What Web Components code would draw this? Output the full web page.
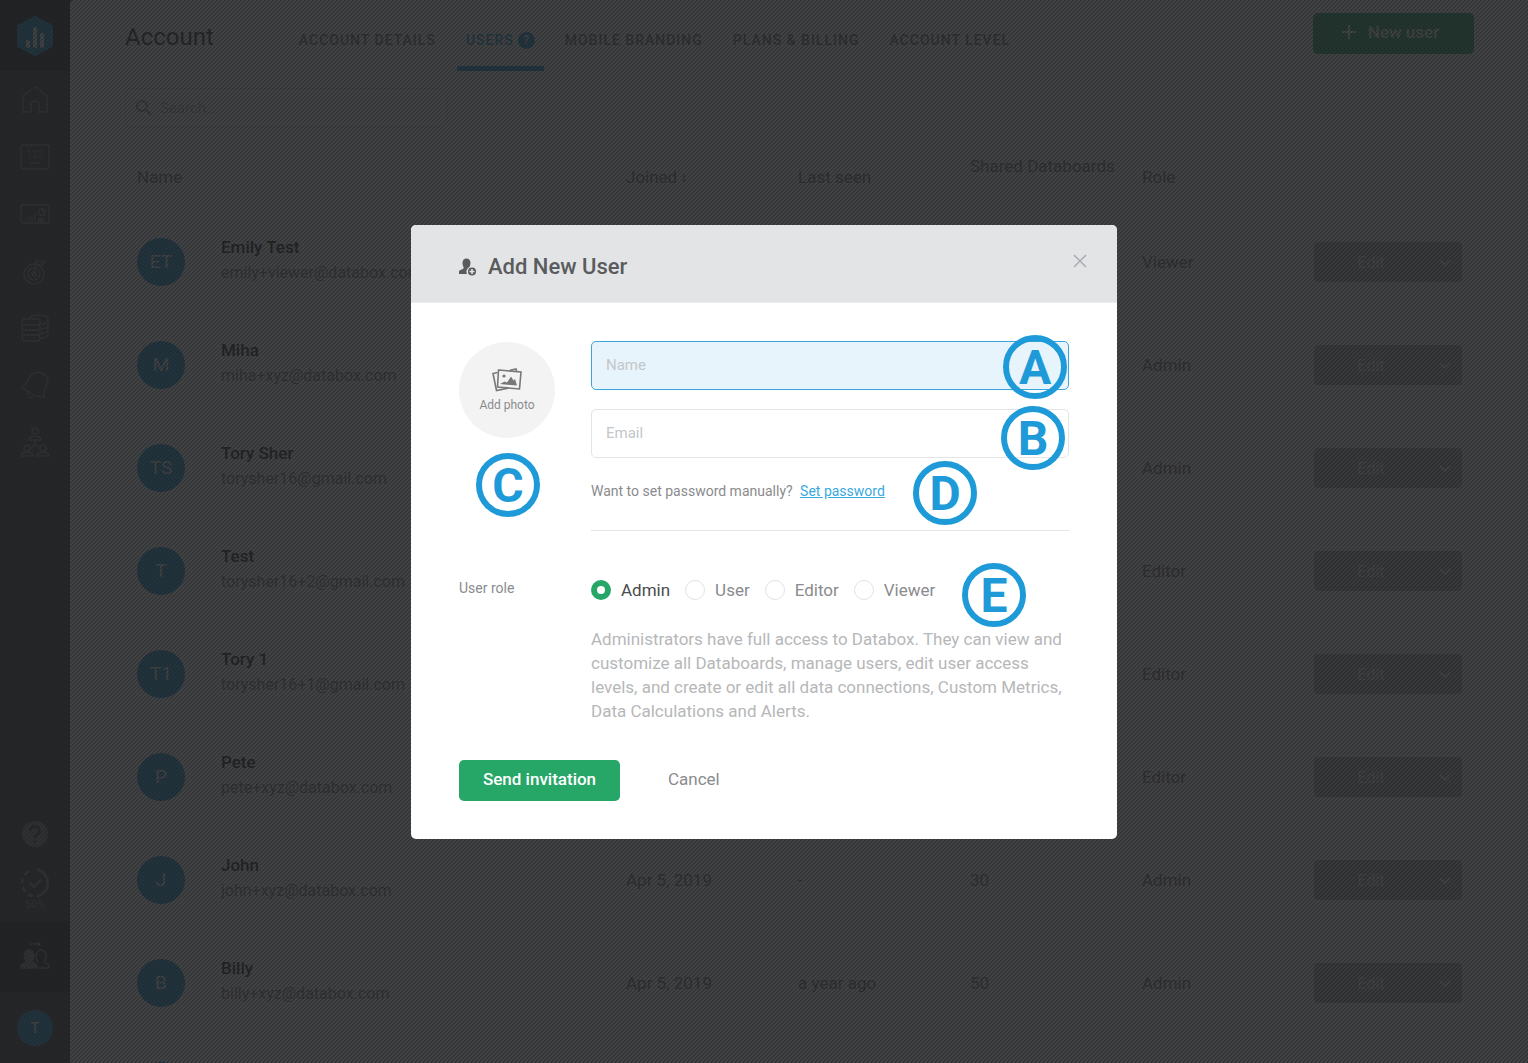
<!DOCTYPE html>
<html lang="en">
<head>
<meta charset="utf-8">
<title>Account - Users</title>
<style>
  html, body {
    margin: 0;
    height: 100%;
  }

  body {
    font-family: Roboto, "Liberation Sans", sans-serif;
    font-size: 16px;
    color: #333;
    overflow: hidden;
    --blue: #1e98d5;
    --green: #26a768;
  }

  account-app {
    height: 100%;
  }
</style>
</head>
<body>
<account-app>
  <app-sidebar slot="sidebar"></app-sidebar>
  <account-header slot="header"></account-header>
  <user-search slot="content"></user-search>
  <user-table slot="content"></user-table>
</account-app>
<modal-backdrop>
  <add-user-dialog></add-user-dialog>
</modal-backdrop>

<script>
customElements.define('account-app', class extends HTMLElement {
  constructor() {
    super()
    this.attachShadow({mode: 'open'})
    this.shadowRoot.innerHTML = this.template
  }

  get template() {
    return `
    <style>
      :host {
        display: flex;
        overflow: hidden;
        background: #3c4043;
      }

      main {
        flex: 1;
        min-width: 0;
        box-sizing: border-box;
        padding: 0 54px 0 55px;
        background: #fff;
        border-radius: 4px 0 0 0;
        overflow: hidden;
      }
    </style>
    <slot name="sidebar"></slot>
    <main>
      <slot name="header"></slot>
      <slot name="content"></slot>
    </main>
    `
  }
})

customElements.define('app-sidebar', class extends HTMLElement {
  constructor() {
    super()
    this.attachShadow({mode: 'open'})
    this.shadowRoot.innerHTML = this.template
  }

  get template() {
    return `
    <style>
      :host {
        display: flex;
        flex-direction: column;
        width: 70px;
        flex: none;
        color: #84888b;
      }

      nav {
        display: flex;
        flex-direction: column;
        height: 100%;
      }

      a {
        display: flex;
        flex-direction: column;
        align-items: center;
        justify-content: center;
        height: 57px;
        flex: none;
        color: inherit;
        text-decoration: none;
        font-size: 11px;
      }

      .logo, .active {
        height: 71px;
        background: #262a2c;
      }

      .help {
        height: 48px;
        margin-top: auto;
      }

      .setup {
        height: 62px;
        margin-bottom: 1px;
      }

      .me {
        height: 71px;
      }

      .me span {
        width: 36px;
        height: 36px;
        line-height: 36px;
        border-radius: 50%;
        background: var(--blue);
        color: #fff;
        text-align: center;
        font-size: 14px;
        font-weight: 500;
      }

      svg {
        width: 30px;
        height: 30px;
        fill: none;
        stroke: currentColor;
        stroke-width: 1.4;
      }

      .logo svg {
        width: 40px;
        height: 42px;
      }

      text {
        fill: currentColor;
        stroke: none;
      }
    </style>
    <nav>
      <a class="logo" href="#" aria-label="Databox">
        <svg viewBox="0 0 40 42"><path d="M20 3 36 11.500V30.500L20 39 4 30.500V11.500Z" fill="#1e98d5" stroke="#1e98d5" stroke-width="4" stroke-linejoin="round"/><path d="M13 27v4M20 14v17M27 20v11" stroke="#fff" stroke-width="4" stroke-linecap="round"/></svg>
      </a>
      <a href="#" aria-label="Home"><svg viewBox="0 0 30 30"><path d="M3 27V11L15 2l12 9v16h-8v-7a4 4 0 0 0-8 0v7Z"/></svg></a>
      <a href="#" aria-label="Metrics"><svg viewBox="0 0 30 30"><rect x="1" y="3" width="28" height="24" rx="2"/><text x="15" y="16" font-size="10" text-anchor="middle">123</text><path d="M10 21h10" stroke-dasharray="3 1"/></svg></a>
      <a href="#" aria-label="Databoards"><svg viewBox="0 0 30 30"><rect x="1" y="6" width="28" height="18" rx="2"/><path d="M6 22v-2M9 22v-4M12 22v-5M15 22v-8M18 20h6M18 22h6"/><circle cx="22" cy="13" r="3.500"/><path d="M22 13V9M22 13h3"/></svg></a>
      <a href="#" aria-label="Goals"><svg viewBox="0 0 30 30"><circle cx="14" cy="18" r="10"/><circle cx="14" cy="18" r="6"/><circle cx="14" cy="18" r="2"/><path d="M14 18 16 4l3 2 6-1-3 4-6-1"/></svg></a>
      <a href="#" aria-label="Data sources"><svg viewBox="0 0 30 30"><rect x="2" y="6" width="18" height="6" rx="3"/><rect x="2" y="12" width="18" height="5" rx="2"/><rect x="2" y="17" width="18" height="5" rx="2"/><rect x="2" y="22" width="18" height="6" rx="3"/><path d="M9 6c0-5 19-5 19 0 0 4-5 5-8 5M20 16c4 0 8-1 8-4V6M20 20c4 0 8-1 8-4v-4M20 25c4 0 8-1 8-4v-5"/></svg></a>
      <a href="#" aria-label="Alerts"><svg viewBox="0 0 30 30"><path d="M2 17C9 13 8 7 12 4c6-4 15 0 16 6 0 5-5 8-4 17l-8-1C12 25 7 21 2 17ZM8 23c-1 3 1 6 5 4"/></svg></a>
      <a href="#" aria-label="Team"><svg viewBox="0 0 30 30"><circle cx="15" cy="4" r="3"/><path d="M9 13c0-5 12-5 12 0ZM15 13v4l-4 4M15 17l4 4"/><circle cx="7" cy="21" r="3"/><circle cx="23" cy="21" r="3"/><path d="M1 29c0-5 12-5 12 0ZM17 29c0-5 12-5 12 0Z"/></svg></a>
      <a class="help" href="#" aria-label="Help"><svg viewBox="0 0 30 30"><circle cx="15" cy="15" r="13" fill="currentColor" stroke="none"/><path d="M10.500 12a4.500 4.500 0 1 1 7 3.500c-2 1.300-2.500 2-2.500 3.500" stroke="#3c4043" stroke-width="2.500"/><circle cx="15" cy="22.500" r="1.600" fill="#3c4043" stroke="none"/></svg></a>
      <a class="setup" href="#"><svg viewBox="0 0 30 30" stroke-linecap="round"><path d="M18 2a13.500 13.500 0 0 1 0 26" stroke-width="3"/><path d="M12 28A13.500 13.500 0 0 1 12 2" stroke-width="3" stroke-dasharray="3 6"/><path d="m10 15 4 4 7-7" stroke-width="2.500"/></svg>50%</a>
      <a class="active" href="#" aria-label="Users"><svg viewBox="0 0 30 30"><path d="M1 26v-3l6-3c-5-6-2-12 2-12s7 6 3 12l5 3v3Z" fill="currentColor"/><path d="M18 20c-4-6-1-12 3-12s7 6 3 12l5 3v3H19M10 2h10M18 0l2 2-2 2"/></svg></a>
      <a class="me" href="#"><span>T</span></a>
    </nav>
    `
  }
})

customElements.define('account-header', class extends HTMLElement {
  constructor() {
    super()
    this.attachShadow({mode: 'open'})
    this.shadowRoot.innerHTML = this.template
  }

  get template() {
    return `
    <style>
      :host {
        display: flex;
        align-items: flex-start;
        height: 71px;
      }

      h1 {
        margin: 23px 76px 0 0;
        font-size: 24px;
        line-height: 28px;
        font-weight: 400;
      }

      nav {
        display: flex;
        gap: 12px;
        flex: 1;
        height: 100%;
      }

      a {
        display: flex;
        align-items: center;
        gap: 4px;
        box-sizing: border-box;
        height: 71px;
        padding: 14px 9px 0;
        border-bottom: 5px solid transparent;
        font-size: 14px;
        font-weight: 500;
        letter-spacing: 1px;
        white-space: nowrap;
        color: #777;
        text-decoration: none;
      }

      a.active {
        color: var(--blue);
        border-color: var(--blue);
      }

      a span {
        width: 17px;
        line-height: 17px;
        border-radius: 50%;
        background: var(--blue);
        color: #fff;
        font-size: 12px;
        font-weight: 700;
        letter-spacing: 0;
        text-align: center;
      }

      button {
        display: flex;
        align-items: center;
        justify-content: center;
        gap: 12px;
        width: 161px;
        height: 41px;
        margin-top: 13px;
        padding: 0 6px 3px 0;
        border: 0;
        border-radius: 5px;
        background: var(--green);
        color: #fff;
        font: 500 17px Roboto, "Liberation Sans", sans-serif;
      }
    </style>
    <h1>Account</h1>
    <nav>
      <a href="#">ACCOUNT DETAILS</a>
      <a class="active" href="#">USERS <span>?</span></a>
      <a href="#">MOBILE BRANDING</a>
      <a href="#">PLANS &amp; BILLING</a>
      <a href="#">ACCOUNT LEVEL</a>
    </nav>
    <button type="button">
      <svg width="14" height="14" viewBox="0 0 14 14"><path d="M7 0v14M0 7h14" stroke="currentColor" stroke-width="2"/></svg>
      New user
    </button>
    `
  }
})

customElements.define('user-search', class extends HTMLElement {
  constructor() {
    super()
    this.attachShadow({mode: 'open'})
    this.shadowRoot.innerHTML = this.template
  }

  get template() {
    return `
    <style>
      :host {
        display: block;
        padding: 17px 0 14px;
      }

      label {
        display: flex;
        align-items: center;
        gap: 8px;
        box-sizing: border-box;
        width: 323px;
        height: 40px;
        padding: 0 10px;
        border: 1px solid #e4e4e4;
        border-radius: 4px;
        color: #999;
      }

      input {
        flex: 1;
        min-width: 0;
        padding: 0;
        border: 0;
        outline: 0;
        background: none;
        font: 15px Roboto, "Liberation Sans", sans-serif;
      }

      input::placeholder {
        color: #bbb;
      }
    </style>
    <label>
      <svg width="16" height="16" viewBox="0 0 16 16" fill="none" stroke="currentColor" stroke-width="2"><circle cx="6" cy="6" r="5"/><path d="m10 10 5 5"/></svg>
      <input type="search" placeholder="Search..." aria-label="Search">
    </label>
    `
  }
})

const users = [
  {initials: 'ET', name: 'Emily Test', email: 'emily+viewer@databox.com', role: 'Viewer'},
  {initials: 'M', name: 'Miha', email: 'miha+xyz@databox.com', role: 'Admin'},
  {initials: 'TS', name: 'Tory Sher', email: 'torysher16@gmail.com', role: 'Admin'},
  {initials: 'T', name: 'Test', email: 'torysher16+2@gmail.com', role: 'Editor'},
  {initials: 'T1', name: 'Tory 1', email: 'torysher16+1@gmail.com', role: 'Editor'},
  {initials: 'P', name: 'Pete', email: 'pete+xyz@databox.com', role: 'Editor'},
  {initials: 'J', name: 'John', email: 'john+xyz@databox.com', joined: 'Apr 5, 2019', seen: '-', boards: '30', role: 'Admin'},
  {initials: 'B', name: 'Billy', email: 'billy+xyz@databox.com', joined: 'Apr 5, 2019', seen: 'a year ago', boards: '50', role: 'Admin'},
  {initials: '', name: '', email: '', role: ''}
]

customElements.define('user-table', class extends HTMLElement {
  constructor() {
    super()
    this.attachShadow({mode: 'open'})
    this.shadowRoot.innerHTML = this.template
  }

  row(user) {
    return `
      <tr>
        <td><user-cell initials="${user.initials}" name="${user.name}" email="${user.email}"></user-cell></td>
        <td>${user.joined || ''}</td>
        <td>${user.seen || ''}</td>
        <td>${user.boards || ''}</td>
        <td>${user.role}</td>
        <td>${user.name ? '<edit-button>Edit</edit-button>' : ''}</td>
      </tr>`
  }

  get template() {
    return `
    <style>
      :host {
        display: block;
      }

      table {
        width: 100%;
        table-layout: fixed;
        border-spacing: 0;
      }

      th, td {
        box-sizing: border-box;
        width: 172px;
        padding: 0 12px;
        border-bottom: 1px solid #eee;
        text-align: left;
        font-size: 17px;
        font-weight: 400;
        color: #777;
      }

      th {
        height: 69px;
        line-height: 22px;
        white-space: nowrap;
        border: 0;
      }

      th:first-child {
        width: auto;
      }

      td {
        height: 103px;
      }
    </style>
    <table>
      <thead>
        <tr>
          <th>Name</th>
          <th>Joined <svg width="6" height="9" viewBox="0 0 6 9" fill="none" stroke="currentColor"><path d="M3 0v8M1 6l2 2 2-2"/></svg></th>
          <th>Last seen</th>
          <th>Shared Databoards<br>&nbsp;</th>
          <th>Role</th>
          <th></th>
        </tr>
      </thead>
      <tbody>${users.map(user => this.row(user)).join('')}</tbody>
    </table>
    `
  }
})

customElements.define('user-cell', class extends HTMLElement {
  constructor() {
    super()
    this.attachShadow({mode: 'open'})
  }

  connectedCallback() {
    this.shadowRoot.innerHTML = this.template
  }

  get template() {
    return `
    <style>
      :host {
        display: flex;
        align-items: center;
        gap: 36px;
      }

      .avatar {
        width: 48px;
        height: 48px;
        line-height: 47px;
        flex: none;
        border-radius: 50%;
        background: var(--blue);
        color: #fff;
        text-align: center;
        font-size: 19px;
      }

      .text {
        display: flex;
        flex-direction: column;
        gap: 4px;
        padding-bottom: 5px;
        line-height: 22px;
      }

      strong {
        font-size: 17px;
        font-weight: 500;
        color: #222;
      }

      .email {
        font-size: 16px;
        color: #888;
      }
    </style>
    <span class="avatar">${this.getAttribute('initials')}</span>
    <span class="text">
      <strong>${this.getAttribute('name')}</strong>
      <span class="email">${this.getAttribute('email')}</span>
    </span>
    `
  }
})

customElements.define('edit-button', class extends HTMLElement {
  constructor() {
    super()
    this.attachShadow({mode: 'open'})
    this.shadowRoot.innerHTML = this.template
  }

  get template() {
    return `
    <style>
      :host {
        display: flex;
        height: 40px;
        border-radius: 4px;
        overflow: hidden;
      }

      button {
        padding: 0;
        border: 0;
        background: #b4b8bb;
        color: #fff;
        font: 16px Roboto, "Liberation Sans", sans-serif;
      }

      .edit {
        flex: 1;
      }

      .more {
        width: 34px;
      }
    </style>
    <button class="edit" type="button"><slot></slot></button>
    <button class="more" type="button" aria-label="More actions">
      <svg width="14" height="10" viewBox="0 0 14 10"><path d="m2 2 5 5 5-5" fill="none" stroke="currentColor" stroke-width="2"/></svg>
    </button>
    `
  }
})

customElements.define('modal-backdrop', class extends HTMLElement {
  constructor() {
    super()
    this.attachShadow({mode: 'open'})
    this.shadowRoot.innerHTML = this.template
  }

  get template() {
    return `
    <style>
      :host {
        position: fixed;
        inset: 0;
        display: flex;
        align-items: center;
        justify-content: center;
        /* fine diagonal hatch over the page */
        background: linear-gradient(135deg,
          rgba(33, 34, 36, .91) 25%, rgba(33, 34, 36, .85) 25% 50%,
          rgba(33, 34, 36, .91) 50% 75%, rgba(33, 34, 36, .85) 75%) 0 0 / 4px 4px;
      }
    </style>
    <slot></slot>
    `
  }
})

customElements.define('callout-badge', class extends HTMLElement {
  constructor() {
    super()
    this.attachShadow({mode: 'open'})
    this.shadowRoot.innerHTML = this.template
  }

  get template() {
    return `
    <style>
      :host {
        position: absolute;
        display: flex;
        align-items: center;
        justify-content: center;
        box-sizing: border-box;
        width: 64px;
        height: 64px;
        padding-top: 2px;
        border: 6px solid #1e9ad8;
        border-radius: 50%;
        color: #1e9ad8;
        font-size: 48px;
        line-height: 48px;
        font-weight: 700;
        pointer-events: none;
      }
    </style>
    <slot></slot>
    `
  }
})

customElements.define('add-user-dialog', class extends HTMLElement {
  constructor() {
    super()
    this.attachShadow({mode: 'open'})
    this.shadowRoot.innerHTML = this.template
  }

  get template() {
    return `
    <style>
      :host {
        position: relative;
        display: block;
        width: 706px;
        max-width: 100%;
        border-radius: 5px;
        background: #fff;
        color: #8a8b8d;
      }

      header {
        display: flex;
        align-items: center;
        padding: 27px 30px 20px 48px;
        border-bottom: 1px solid #ececee;
        border-radius: 5px 5px 0 0;
        background: #e2e4e6;
      }

      h2 {
        flex: 1;
        margin: 0 0 0 11px;
        font-size: 22px;
        line-height: 30px;
        font-weight: 500;
        color: #5a5b5d;
      }

      button, input {
        font-family: inherit;
      }

      button {
        padding: 0;
        border: 0;
        background: none;
        color: inherit;
        font-size: 17px;
      }

      .close {
        display: flex;
        margin-bottom: 12px;
        color: #a9adb3;
      }

      form {
        display: flex;
        flex-direction: column;
        padding: 38px 48px;
      }

      .row {
        display: flex;
        gap: 36px;
      }

      .side {
        width: 96px;
        flex: none;
      }

      .fields {
        display: flex;
        flex-direction: column;
        flex: 1;
        min-width: 0;
      }

      .photo {
        display: flex;
        flex-direction: column;
        align-items: center;
        justify-content: center;
        gap: 6px;
        height: 96px;
        margin-top: 1px;
        border-radius: 50%;
        background: #f3f3f3;
        font-size: 12px;
      }

      .text {
        box-sizing: border-box;
        height: 49px;
        margin: 0 0 19px;
        padding: 0 14px;
        border: 1px solid #e4e4e5;
        border-radius: 5px;
        outline: 0;
        background: #fff;
        font-size: 15px;
      }

      .text.focus {
        border-color: #3aa5da;
        background: #e8f4fb;
      }

      .text::placeholder {
        color: #c3c7ca;
      }

      .hint {
        margin: 4px 0 29px;
        font-size: 14px;
        line-height: 20px;
      }

      .hint a {
        margin-left: 4px;
        color: #3ba9dd;
      }

      hr {
        width: 100%;
        margin: 0 0 47px;
        border: 0;
        border-top: 1px solid #e4e4e4;
      }

      .side.role {
        font-size: 14px;
        line-height: 20px;
      }

      .roles {
        display: flex;
        gap: 15px;
        height: 24px;
      }

      .roles label {
        display: flex;
        align-items: center;
        gap: 10px;
        font-size: 17px;
        line-height: 24px;
      }

      .roles input {
        appearance: none;
        box-sizing: border-box;
        width: 20px;
        height: 20px;
        margin: 0;
        border: 1px solid #e2e2e2;
        border-radius: 50%;
        background: #fff;
      }

      .roles input:checked {
        border: 6px solid var(--green);
      }

      .roles label:has(:checked) {
        color: #4a4b4d;
      }

      .about {
        margin: 25px 0 37px;
        font-size: 17px;
        line-height: 24px;
        color: #b6b7b9;
      }

      .actions {
        display: flex;
        gap: 48px;
      }

      .actions button {
        height: 41px;
        padding-bottom: 3px;
      }

      .actions .send {
        width: 161px;
        border-radius: 5px;
        background: var(--green);
        color: #fff;
        font-weight: 500;
      }
    </style>
    <header>
      <svg width="18" height="18" viewBox="0 0 18 18"><path d="M0 16v-2.500c0-1.500 3-1.800 4.500-3 .8-.8-.8-2.500-1-5C3.300 2.400 5 .5 7.500.5s4.200 1.900 4 5c-.1 1.300-.6 2.500-1 3.500a5 5 0 0 0-2.500 7Z" fill="#5a5b5d"/><circle cx="13" cy="13.500" r="4" fill="#5a5b5d"/><path d="M13 11v5M10.500 13.500h5" stroke="#e2e4e6" stroke-width="1.600"/></svg>
      <h2>Add New User</h2>
      <button class="close" type="button" aria-label="Close">
        <svg width="14" height="14" viewBox="0 0 14 14"><path d="m1 1 12 12M13 1 1 13" stroke="currentColor" stroke-width="1.500"/></svg>
      </button>
    </header>
    <form>
      <div class="row">
        <div class="side">
          <button class="photo side" type="button">
            <svg width="30" height="24" viewBox="0 0 30 24" fill="none" stroke="#77787a" stroke-width="1.600"><path d="M5.500 4.500 1 5.500l3.500 17L16 20.200M18 2.200 24 1l.6 2"/><path d="m6.500 2 22.500 2-1.500 17-22-2Z" fill="#f3f3f3"/><circle cx="12" cy="8" r="1.600" fill="#77787a" stroke="none"/><path d="m8 16 4.500-2.500 2.500 1 4-6 2.500 4 1.500-1.500 2 6.500Z" fill="#77787a" stroke="none"/></svg>
            Add photo
          </button>
        </div>
        <div class="fields">
          <input class="text focus" type="text" placeholder="Name" aria-label="Name">
          <input class="text" type="email" placeholder="Email" aria-label="Email">
          <p class="hint">Want to set password manually? <a href="#">Set password</a></p>
          <hr>
        </div>
      </div>
      <div class="row">
        <div class="side role" id="role-label">User role</div>
        <div class="fields">
          <div class="roles" role="radiogroup" aria-labelledby="role-label">
            <label><input type="radio" name="role" checked>Admin</label>
            <label><input type="radio" name="role">User</label>
            <label><input type="radio" name="role">Editor</label>
            <label><input type="radio" name="role">Viewer</label>
          </div>
          <p class="about">Administrators have full access to Databox. They can view and customize all Databoards, manage users, edit user access levels, and create or edit all data connections, Custom Metrics, Data Calculations and Alerts.</p>
        </div>
      </div>
      <div class="actions">
        <button class="send" type="button">Send invitation</button>
        <button type="button">Cancel</button>
      </div>
    </form>
    <callout-badge style="left: 592px; top: 110px">A</callout-badge>
    <callout-badge style="left: 590px; top: 181px">B</callout-badge>
    <callout-badge style="left: 65px; top: 228px">C</callout-badge>
    <callout-badge style="left: 502px; top: 236px">D</callout-badge>
    <callout-badge style="left: 551px; top: 338px">E</callout-badge>
    `
  }
})
</script>
</body>
</html>
